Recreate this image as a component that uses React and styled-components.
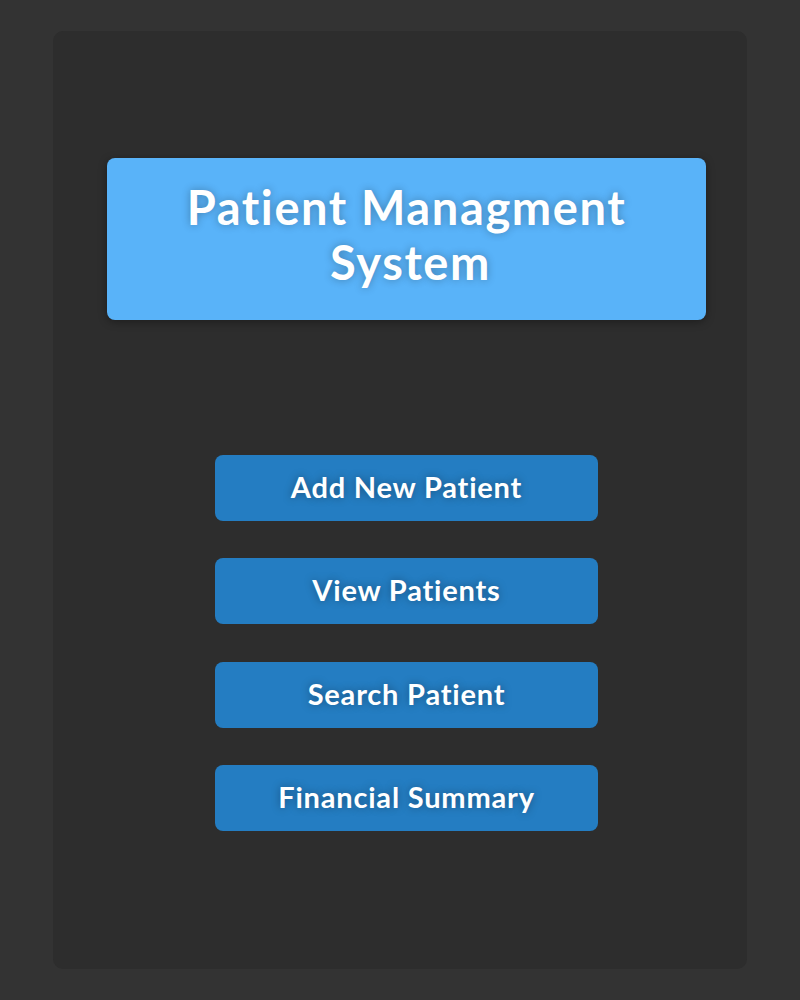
import React from "react";
import styled, { createGlobalStyle } from "styled-components";

const GlobalStyle = createGlobalStyle`
  html, body {
    margin: 0;
    padding: 0;
    background: #333333;
    font-family: Lato, "Noto Sans", sans-serif;
  }
`;

const Page = styled.div`
  padding: 31px 53px;
  display: flex;
  justify-content: center;
`;

const Card = styled.div`
  width: 694px;
  height: 938px;
  box-sizing: border-box;
  background: #2d2d2d;
  border-radius: 10px;
  padding: 127px 41px 0 54px;
  display: flex;
  flex-direction: column;
  align-items: center;
`;

const TitleBox = styled.div`
  width: 599px;
  height: 162px;
  box-sizing: border-box;
  padding-bottom: 9px;
  background: #59b3f9;
  border-radius: 8px;
  box-shadow: 0 2px 8px rgba(0, 0, 0, 0.35);
  display: flex;
  align-items: center;
  justify-content: center;
`;

const Title = styled.h1`
  margin: 0;
  color: #fff;
  font-size: 47px;
  font-weight: 700;
  line-height: 55px;
  letter-spacing: 1.6px;
  text-align: center;
  text-shadow: 0 0 8px rgba(0, 0, 0, 0.3);
`;

const TitleLine = styled.span`
  display: block;
  padding-left: ${(p) => p.$shift || 0}px;
`;

const Menu = styled.nav`
  margin-top: 135px;
  display: flex;
  flex-direction: column;
  gap: 37.3px;
`;

const MenuButton = styled.button`
  width: 383px;
  height: 66px;
  padding: 0 0 3px;
  border: none;
  border-radius: 8px;
  background: #247dc2;
  color: #fff;
  font-family: Lato, "Noto Sans", sans-serif;
  font-size: 29px;
  font-weight: 700;
  letter-spacing: 0.8px;
  text-shadow: 0 0 8px rgba(0, 0, 0, 0.35);
  cursor: pointer;
`;

const items = ["Add New Patient", "View Patients", "Search Patient", "Financial Summary"];

export default function App() {
  return (
    <>
      <GlobalStyle />
      <Page>
        <Card>
          <TitleBox>
            <Title>
              <TitleLine>Patient Managment</TitleLine>
              <TitleLine $shift={8}>System</TitleLine>
            </Title>
          </TitleBox>
          <Menu>
            {items.map((label) => (
              <MenuButton key={label}>{label}</MenuButton>
            ))}
          </Menu>
        </Card>
      </Page>
    </>
  );
}
